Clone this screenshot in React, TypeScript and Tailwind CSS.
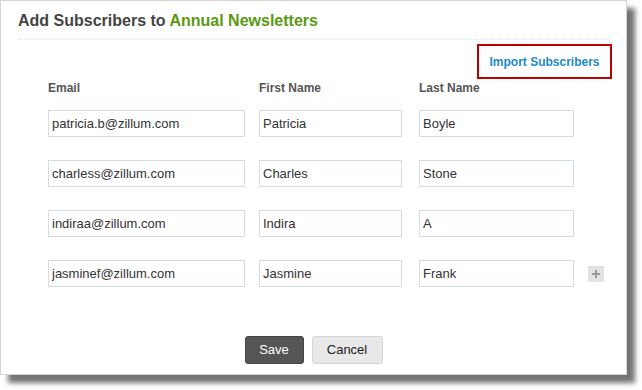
import React from 'react'

const rows = [
    { email: 'patricia.b@zillum.com', first: 'Patricia', last: 'Boyle' },
    { email: 'charless@zillum.com', first: 'Charles', last: 'Stone' },
    { email: 'indiraa@zillum.com', first: 'Indira', last: 'A' },
    { email: 'jasminef@zillum.com', first: 'Jasmine', last: 'Frank' },
]

const inputCls = 'h-[27px] border border-[#d3dde8] bg-white px-[3px] text-[13px] text-[#333] outline-none font-["Liberation_Sans",Arial,sans-serif]'

export default function App() {
    return (
        <div className="w-[642px] h-[390px] bg-white font-['Liberation_Sans',Arial,sans-serif]">
            <div className="w-[627px] h-[375px] bg-white border border-[#d4d4d4] shadow-[8px_8px_5px_rgba(0,0,0,0.55)] flex flex-col">
                {/* header */}
                <div className="mx-[17px] h-[39px] border-b border-dotted border-[#e0e0e0] flex items-end pb-[10px]">
                    <h2 className="text-[16px] font-bold text-[#444] leading-none">
                        Add Subscribers to <span className="text-[#5a9a10]">Annual Newsletters</span>
                    </h2>
                </div>
                <div className="flex justify-end pr-[14px] pt-[4px]">
                    <div className="w-[135px] h-[35px] border-2 border-[#c00000] flex items-center justify-center">
                        <span className="text-[12px] font-bold text-[#1b8ac8]">Import Subscribers</span>
                    </div>
                </div>

                {/* column headers */}
                <div className="flex pl-[47px] mt-[2px] text-[12px] font-bold text-[#555] leading-none h-[14px] items-center">
                    <div className="w-[211px]">Email</div>
                    <div className="w-[160px]">First Name</div>
                    <div>Last Name</div>
                </div>

                <div className="flex flex-col gap-[23px] pl-[47px] mt-[15px]">
                    {rows.map((r, i) => (
                        <div key={i} className="flex items-center">
                            <input readOnly value={r.email} className={`${inputCls} w-[197px]`} />
                            <input readOnly value={r.first} className={`${inputCls} w-[143px] ml-[14px]`} />
                            <input readOnly value={r.last} className={`${inputCls} w-[155px] ml-[17px]`} />
                            {i === rows.length - 1 && (
                                <div className="ml-[14px] w-[16px] h-[16px] bg-[#e2e2e2] flex items-center justify-center">
                                    <svg width="10" height="10" viewBox="0 0 10 10">
                                        <rect x="4" y="1" width="2" height="8" fill="#9a9a9a" />
                                        <rect x="1" y="4" width="8" height="2" fill="#9a9a9a" />
                                    </svg>
                                </div>
                            )}
                        </div>
                    ))}
                </div>

                {/* buttons */}
                <div className="flex justify-center gap-[8px] mt-auto mb-[10px]">
                    <button className="w-[59px] h-[28px] rounded-[3px] bg-[#555] border border-[#444] text-white text-[13px]">Save</button>
                    <button className="w-[71px] h-[28px] rounded-[3px] bg-[#e8e8e8] border border-[#d6d6d6] text-[#222] text-[13px]">Cancel</button>
                </div>
            </div>
        </div>
    )
}
